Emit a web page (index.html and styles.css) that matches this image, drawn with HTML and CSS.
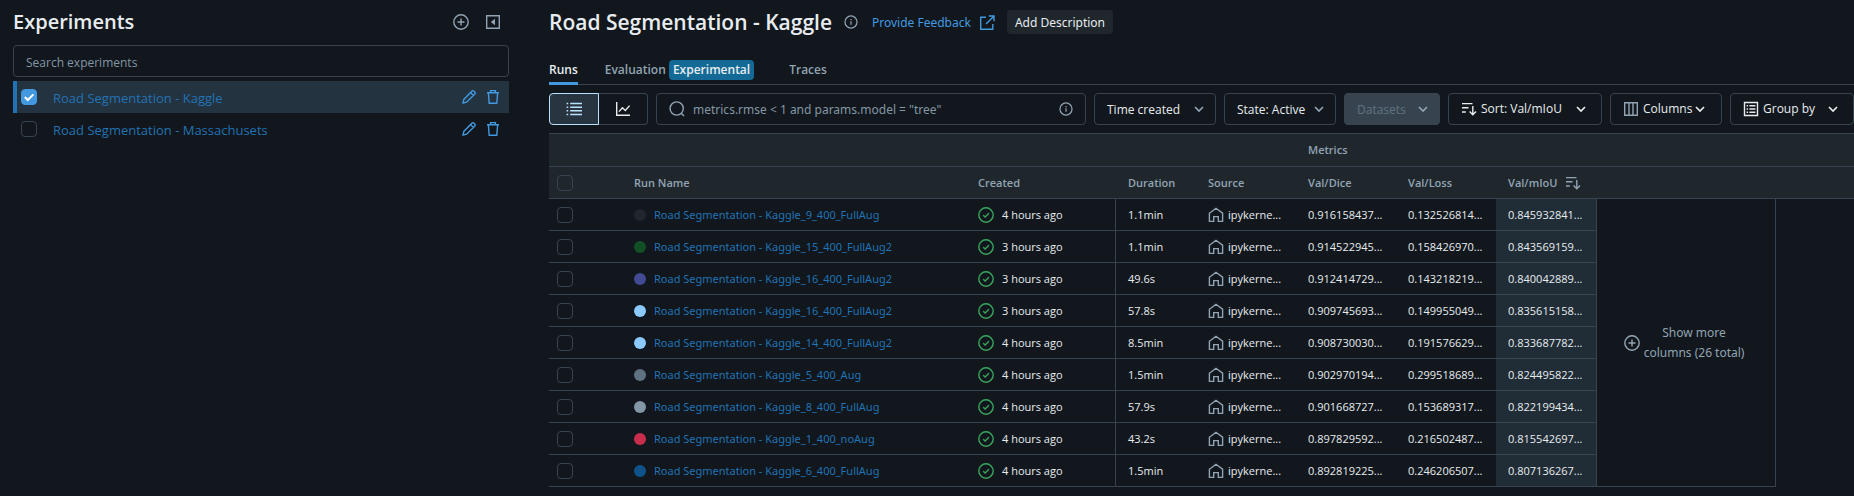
FILE: index.html
```html
<!DOCTYPE html>
<html lang="en">
<head>
<meta charset="utf-8">
<title>Experiments</title>
<link rel="stylesheet" href="styles.css">
</head>
<body>
<svg class="defs" aria-hidden="true">
  <symbol id="plus" viewBox="0 0 16 16"><circle cx="8" cy="8" r="7.2"/><path d="M8 4.5v7M4.5 8h7"/></symbol>
  <symbol id="collapse" viewBox="0 0 16 16"><path d="M1.7 1.7h12.6v12.6H1.7z"/><path class="solid" d="M10 4.8v6.4L5.8 8z"/></symbol>
  <symbol id="pencil" viewBox="0 0 16 16"><path d="M2 14l.8-3.6 8.3-8.3a1.2 1.2 0 0 1 1.7 0l1.1 1.1a1.2 1.2 0 0 1 0 1.7l-8.3 8.3L2 14zM9.6 3.6l2.8 2.8"/></symbol>
  <symbol id="trash" viewBox="0 0 16 16"><path d="M2 3.7h12M5.6 3.5V1.6h4.8v1.9M3.4 3.9l.8 10.4h7.6l.8-10.4"/></symbol>
  <symbol id="info" viewBox="0 0 16 16"><circle cx="8" cy="8" r="6.9"/><path d="M8 7.2v4M8 4.6v1.5"/></symbol>
  <symbol id="external" viewBox="0 0 16 16"><path d="M7 2.2H1.7v12.1h12.1V9M9.8 1h5.2v5.2M14.6 1.4L7 9"/></symbol>
  <symbol id="list" viewBox="0 0 16 16"><path d="M4.2 2.5H16M4.2 6.2H16M4.2 9.8H16M4.2 13.5H16M.6 2.5h1.6M.6 6.2h1.6M.6 9.8h1.6M.6 13.5h1.6"/></symbol>
  <symbol id="chart" viewBox="0 0 16 16"><path d="M1.7 1v13.3H15M4 10.6l3.4-3.8 2.9 2.6 4.3-4.8"/></symbol>
  <symbol id="search" viewBox="0 0 16 16"><circle cx="7.7" cy="7.5" r="6.6"/><path d="M12.2 12.2L15 15"/></symbol>
  <symbol id="sort" viewBox="0 0 16 16"><path d="M1 2.6h10.5M1 6.8h6.5M1 11h3.8M11.8 5v8.6M8.6 10.6l3.2 3.2 3.2-3.2"/></symbol>
  <symbol id="columns" viewBox="0 0 16 16"><path d="M1.7 1.7h12.6v12.6H1.7zM6 1.7v12.6M10 1.7v12.6"/></symbol>
  <symbol id="group" viewBox="0 0 16 16"><path d="M1.5 1.5h13v13h-13zM6.4 4.8h6M6.4 8h6M6.4 11.2h6M3.6 4.8h1.5M3.6 8h1.5M3.6 11.2h1.5"/></symbol>
  <symbol id="chevron" viewBox="0 0 16 16"><path d="M4 6l4 4 4-4"/></symbol>
  <symbol id="check" viewBox="0 0 16 16"><circle cx="8" cy="8" r="7.2"/><path d="M5.2 8.2l2 1.9 3.7-3.8"/></symbol>
  <symbol id="home" viewBox="0 0 16 16"><path d="M1.4 6.2L8 1.3l6.6 4.9v8.2h-4.3V9.6H5.7v4.8H1.4z"/></symbol>
</svg>
<div class="app">
  <aside class="sidebar">
    <header class="sidebar-head">
      <h2 class="title">Experiments</h2>
      <button class="icon-btn" aria-label="Create experiment"><svg class="icon"><use href="#plus"/></svg></button>
      <button class="icon-btn" aria-label="Collapse"><svg class="icon"><use href="#collapse"/></svg></button>
    </header>
    <input class="field" type="text" placeholder="Search experiments" aria-label="Search experiments">
    <ul class="experiments">
      <li class="experiment selected">
        <input class="box" type="checkbox" id="e1" aria-label="Select Road Segmentation - Kaggle" checked>
        <a class="experiment-name" href="#kaggle">Road Segmentation - Kaggle</a>
        <button class="icon-btn blue" aria-label="Rename"><svg class="icon"><use href="#pencil"/></svg></button>
        <button class="icon-btn blue" aria-label="Delete"><svg class="icon"><use href="#trash"/></svg></button>
      </li>
      <li class="experiment">
        <input class="box" type="checkbox" id="e2" aria-label="Select Road Segmentation - Massachusets">
        <a class="experiment-name" href="#mass">Road Segmentation - Massachusets</a>
        <button class="icon-btn blue" aria-label="Rename"><svg class="icon"><use href="#pencil"/></svg></button>
        <button class="icon-btn blue" aria-label="Delete"><svg class="icon"><use href="#trash"/></svg></button>
      </li>
    </ul>
  </aside>
  <main class="main">
    <header class="main-head">
      <h1 class="title">Road Segmentation - Kaggle</h1>
      <svg class="icon small"><use href="#info"/></svg>
      <a class="feedback" href="#feedback">Provide Feedback <svg class="icon"><use href="#external"/></svg></a>
      <button class="describe">Add Description</button>
    </header>
    <nav class="tabs">
      <a class="tab active" href="#runs">Runs</a>
      <a class="tab" href="#evaluation">Evaluation <span class="tag">Experimental</span></a>
      <a class="tab" href="#traces">Traces</a>
    </nav>
    <div class="toolbar">
      <div class="views">
        <button class="view on" aria-label="Table view"><svg class="icon"><use href="#list"/></svg></button>
        <button class="view" aria-label="Chart view"><svg class="icon"><use href="#chart"/></svg></button>
      </div>
      <label class="search">
        <svg class="icon"><use href="#search"/></svg>
        <input class="search-input" type="text" aria-label="Search runs" placeholder='metrics.rmse &lt; 1 and params.model = "tree"'>
        <svg class="icon small"><use href="#info"/></svg>
      </label>
      <select class="drop time" aria-label="Time created"><option>Time created</option></select>
      <select class="drop state" aria-label="State"><option>State: Active</option></select>
      <select class="drop datasets" aria-label="Datasets" disabled><option>Datasets</option></select>
      <button class="menu sort"><svg class="icon"><use href="#sort"/></svg>Sort: Val/mIoU<svg class="icon chev"><use href="#chevron"/></svg></button>
      <button class="menu cols"><svg class="icon dim"><use href="#columns"/></svg>Columns<svg class="icon chev"><use href="#chevron"/></svg></button>
      <button class="menu group"><svg class="icon"><use href="#group"/></svg>Group by<svg class="icon chev"><use href="#chevron"/></svg></button>
    </div>
    <table class="runs">
      <colgroup><col class="c-check"><col class="c-name"><col class="c-created"><col class="c-duration"><col class="c-std"><col class="c-std"><col class="c-std"><col class="c-std"><col class="c-more"><col></colgroup>
      <thead>
        <tr><th colspan="5"></th><th colspan="5">Metrics</th></tr>
        <tr><th class="pick"><input class="box" type="checkbox" aria-label="Select all runs"></th><th>Run Name</th><th>Created</th><th>Duration</th><th>Source</th><th>Val/Dice</th><th>Val/Loss</th><th><span class="cell">Val/mIoU <svg class="icon"><use href="#sort"/></svg></span></th><th colspan="2"></th></tr>
      </thead>
      <tbody id="rows"></tbody>
    </table>
  </main>
</div>
<script src="runs.js"></script>
</body>
</html>
```
FILE: styles.css
```css
* { box-sizing: border-box; }
body {
  margin: 0;
  background: #11171c;
  color: #e8ecf0;
  font: 12px/20px "Open Sans", "Noto Sans", sans-serif;
  overflow: hidden;
}
button, input, select { font: inherit; color: inherit; margin: 0; }
button { background: none; border: 0; padding: 0; }
a { color: #2272b4; text-decoration: none; }
.defs { display: none; }
.icon { width: 16px; height: 16px; flex: none; display: block; fill: none; stroke: currentColor; stroke-width: 1.4; }
.icon.small { width: 14px; height: 14px; color: #92a4b3; }
.solid { fill: currentColor; stroke: none; }
.title { margin: 0; font-size: 20px; line-height: 28px; font-weight: 600; }

.app { display: flex; min-height: 100vh; }
.sidebar { flex: none; width: 509px; padding: 8px 0 0 13px; }
.sidebar-head { display: flex; align-items: center; gap: 16px; padding-right: 8px; height: 28px; }
.sidebar-head .title { flex: 1; }
.icon-btn { color: #92a4b3; }
.icon-btn.blue { color: #4299e0; }
.field {
  display: block; width: 100%; height: 32px; margin-top: 9px; padding: 2px 12px 0;
  background: none; border: 1px solid #37444f; border-radius: 4px;
}
::placeholder { color: #8396a5; opacity: 1; }
.experiments { list-style: none; margin: 4px 0 0; padding: 0; }
.experiment { display: flex; align-items: center; gap: 8px; height: 32px; padding: 0 8px 0 4px; border-left: 4px solid transparent; }
.experiment.selected { background: #243340; border-color: #2272b4; }
.experiment-name { flex: 1; margin-left: 8px; padding-top: 2px; font-size: 13px; }
.box {
  appearance: none; flex: none; display: block; width: 16px; height: 16px;
  border: 1px solid #37444f; border-radius: 4px;
}
.box:checked {
  border-color: #4299e0;
  background: #4299e0 url("data:image/svg+xml,%3Csvg xmlns='http://www.w3.org/2000/svg' viewBox='0 0 14 14'%3E%3Cpath d='M2.8 7l3 3 5.6-5.6' fill='none' stroke='white' stroke-width='2'/%3E%3C/svg%3E");
}

.main { flex: 1; min-width: 0; padding: 8px 0 0 40px; }
.main-head { display: flex; align-items: center; height: 28px; }
.main-head .title { font-size: 21px; }
.main-head > .icon { margin: 0 14px 0 12px; }
.feedback { display: flex; align-items: center; gap: 8px; padding-top: 2px; color: #4299e0; font-family: "Noto Sans", sans-serif; }
.describe { margin-left: 12px; padding: 2px 8px 0; height: 24px; border-radius: 4px; background: #1f272d; font-family: "Noto Sans", sans-serif; }
.tabs { display: flex; gap: 27px; height: 49px; padding-top: 22px; border-bottom: 1px solid #37444f; }
.tab { color: #92a4b3; font-weight: 600; height: 27px; line-height: 24px; white-space: nowrap; }
.tab.active { color: #e8ecf0; border-bottom: 3px solid #4299e0; }
.tab:last-child { margin-left: 8px; }
.tag { display: inline-block; height: 20px; line-height: 20px; padding: 0 4px; border-radius: 4px; background: #136a96; color: #e8ecf0; }
.toolbar { display: flex; gap: 8px; margin: 8px 0; }
.views { display: flex; flex: none; }
.view { display: grid; place-items: center; width: 49px; height: 32px; border: 1px solid #37444f; border-left: 0; border-radius: 0 4px 4px 0; }
.view.on { width: 50px; border: 1px solid #bae1fc; border-radius: 4px 0 0 4px; background: #283540; color: #bae1fc; }
.search { flex: 1; min-width: 0; display: flex; align-items: center; gap: 8px; padding: 0 12px; border: 1px solid #37444f; border-radius: 4px; color: #92a4b3; }
.search-input { flex: 1; min-width: 0; padding: 2px 0 0; background: none; border: 0; outline: 0; font-family: "Noto Sans", sans-serif; }
.drop, .menu { flex: none; height: 32px; border: 1px solid #37444f; border-radius: 4px; }
.drop {
  appearance: none; padding: 2px 12px 0; opacity: 1;
  background: url("data:image/svg+xml,%3Csvg xmlns='http://www.w3.org/2000/svg' viewBox='0 0 16 16'%3E%3Cpath d='M4 6l4 4 4-4' fill='none' stroke='%2392a4b3' stroke-width='1.7'/%3E%3C/svg%3E") no-repeat right 8px center / 16px;
}
.drop.datasets { background-color: #37444f; color: #5f7281; }
.time { width: 122px; }
.state, .cols { width: 112px; }
.datasets { width: 96px; }
.sort { width: 154px; }
.group { width: 124px; }
.menu { display: flex; align-items: center; gap: 4px; padding: 0 12px; }
.chev { margin-left: auto; stroke-width: 1.7; }
.cols .chev { margin-left: -4px; }
.dim { color: #92a4b3; }

.runs { width: 100%; table-layout: fixed; border-collapse: separate; border-spacing: 0; border-top: 1px solid #37444f; font-size: 11px; }
.c-check { width: 73px; }
.c-name { width: 344px; }
.c-created { width: 150px; }
.c-duration { width: 80px; }
.c-std { width: 100px; }
.c-more { width: 180px; }
.runs th, .runs td { height: 32px; padding: 0 0 0 12px; text-align: left; white-space: nowrap; border-bottom: 1px solid #37444f; }
.runs th { background: #1f272d; color: #92a4b3; font-weight: 600; }
.runs thead tr:first-child th { height: 33px; }
.runs .pick { padding-left: 8px; }
.runs .created { border-right: 1px solid #37444f; }
.runs .sorted { background: #202d36; }
.runs .blank { border: 0; }
.runs .more { padding: 0; border-left: 1px solid #37444f; border-right: 1px solid #37444f; }
.cell { display: flex; align-items: center; gap: 8px; }
.source .cell { gap: 4px; }
.source .icon { color: #92a4b3; }
.created .icon { color: #3ba65e; }
.run-link { font-family: "Noto Sans", sans-serif; }
.dot { width: 12px; height: 12px; border-radius: 50%; }
.more-btn { display: flex; align-items: center; justify-content: center; gap: 4px; width: 100%; padding-right: 4px; color: #92a4b3; font: 12px/20px "Noto Sans", sans-serif; }
```
FILE: runs.js
```javascript
const runs = [
  ["#1f272d", "Kaggle_9_400_FullAug", 4, "1.1min", "0.916158437", "0.132526814", "0.845932841"],
  ["#115026", "Kaggle_15_400_FullAug2", 3, "1.1min", "0.914522945", "0.158426970", "0.843569159"],
  ["#434a93", "Kaggle_16_400_FullAug2", 3, "49.6s", "0.912414729", "0.143218219", "0.840042889"],
  ["#8acaff", "Kaggle_16_400_FullAug2", 3, "57.8s", "0.909745693", "0.149955049", "0.835615158"],
  ["#8acaff", "Kaggle_14_400_FullAug2", 4, "8.5min", "0.908730030", "0.191576629", "0.833687782"],
  ["#5f7281", "Kaggle_5_400_Aug", 4, "1.5min", "0.902970194", "0.299518689", "0.824495822"],
  ["#8396a5", "Kaggle_8_400_FullAug", 4, "57.9s", "0.901668727", "0.153689317", "0.822199434"],
  ["#c82d4c", "Kaggle_1_400_noAug", 4, "43.2s", "0.897829592", "0.216502487", "0.815542697"],
  ["#0e538b", "Kaggle_6_400_FullAug", 4, "1.5min", "0.892819225", "0.246206507", "0.807136267"],
];
const icon = (id) => `<svg class="icon"><use href="#${id}"/></svg>`;
document.getElementById("rows").innerHTML = runs.map(([color, name, hours, duration, dice, loss, miou], i) => `
  <tr>
    <td class="pick"><input class="box" type="checkbox" aria-label="Select ${name}"></td>
    <td><span class="cell"><span class="dot" style="background:${color}"></span><a class="run-link" href="#run${i}">Road Segmentation - ${name}</a></span></td>
    <td class="created"><span class="cell">${icon("check")}${hours} hours ago</span></td>
    <td>${duration}</td>
    <td class="source"><span class="cell">${icon("home")}ipykerne...</span></td>
    <td>${dice}...</td>
    <td>${loss}...</td>
    <td class="sorted">${miou}...</td>
    ${i === 0 ? `<td class="more" rowspan="${runs.length}"><button class="more-btn">${icon("plus")}<span>Show more<br>columns (26 total)</span></button></td><td class="blank" rowspan="${runs.length}"></td>` : ""}
  </tr>`).join("");
```
